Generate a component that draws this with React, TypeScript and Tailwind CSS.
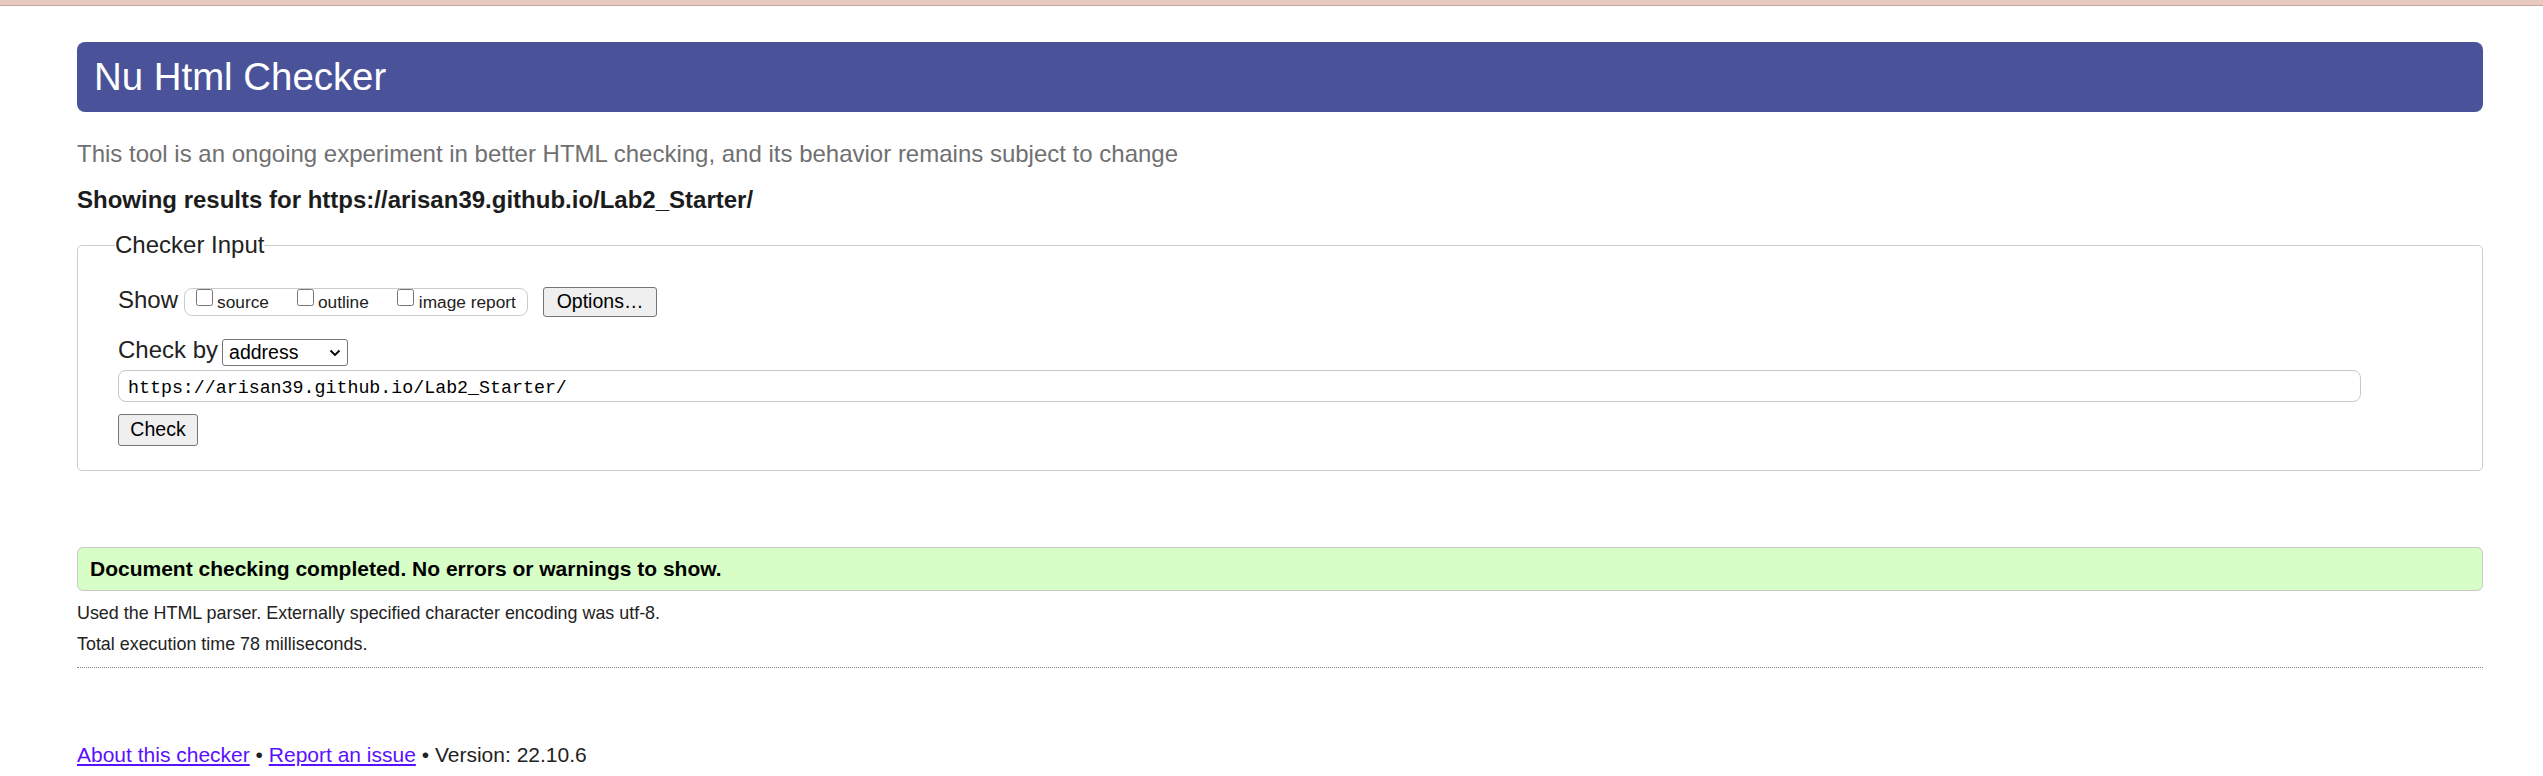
import React from "react";

function Chevron() {
  return (
    <svg width="12" height="8" viewBox="0 0 12 8" className="block">
      <path d="M1.5 1.5 L6 6 L10.5 1.5" fill="none" stroke="#000" strokeWidth="1.8" />
    </svg>
  );
}

export default function App() {
  return (
    <div className="min-h-screen bg-white text-[#222] font-['Liberation_Sans',Arial,sans-serif]">
      <div className="h-[6px] bg-[#e8c8bf] border-b border-[#c4a69e]" />
      <div className="ml-[77px] mr-[60px]">
        <header className="mt-[36px] h-[70px] rounded-[8px] bg-[#4a539a] flex items-center pl-[17px]">
          <h1 className="text-[38.4px] leading-none text-white font-normal">Nu Html Checker</h1>
        </header>
        <p className="mt-[28px] text-[24px] leading-[28px] text-[#707070]">
          This tool is an ongoing experiment in better HTML checking, and its behavior remains subject to change
        </p>
        <p className="mt-[18px] text-[24px] leading-[28px] font-bold text-[#1c1c1c]">
          Showing results for https://arisan39.github.io/Lab2_Starter/
        </p>
        <fieldset className="mt-[18px] border border-[#cccccc] rounded-[5px] pl-[40px] pb-[24px]">
          <legend className="ml-[-3px] text-[24px] leading-[26px] text-[#222]">Checker Input</legend>
          <div className="mt-[29px] flex items-start h-[30px]">
            <span className="mt-[-1px] text-[24px] leading-[28px]">Show</span>
            <div className="ml-[6px] mt-[1px] h-[28px] w-[344px] border border-[#cccccc] rounded-[8px] flex items-start pl-[11px]">
              <input type="checkbox" className="m-0 w-[17px] h-[17px]" />
              <span className="ml-[4px] mt-[3px] text-[17.3px] leading-[20px]">source</span>
              <input type="checkbox" className="ml-[28px] m-0 w-[17px] h-[17px]" />
              <span className="ml-[4px] mt-[3px] text-[17.3px] leading-[20px]">outline</span>
              <input type="checkbox" className="ml-[28px] m-0 w-[17px] h-[17px]" />
              <span className="ml-[5px] mt-[3px] text-[17.3px] leading-[20px]">image report</span>
            </div>
            <button className="ml-[15px] h-[30px] w-[114px] bg-[#efefef] border border-[#767676] rounded-[3px] text-[19.5px] leading-none text-black">
              Options…
            </button>
          </div>
          <div className="mt-[19px] flex items-start">
            <span className="text-[24px] leading-[28px]">Check by</span>
            <div className="ml-[4px] mt-[3px] h-[27px] w-[126px] border border-[#767676] rounded-[3px] flex items-center justify-between pl-[6px] pr-[6px]">
              <span className="text-[19.5px] leading-none text-black">address</span>
              <Chevron />
            </div>
          </div>
          <div className="mt-[4px] h-[32px] w-[2243px] border border-[#c8c8c8] rounded-[8px] flex items-center pl-[9px] pt-[4px] font-['Liberation_Mono','DejaVu_Sans_Mono',monospace] text-[18.3px] leading-none text-black">
            https://arisan39.github.io/Lab2_Starter/
          </div>
          <button className="mt-[12px] block h-[32px] w-[80px] bg-[#efefef] border border-[#767676] rounded-[3px] text-[19.5px] leading-none text-black">
            Check
          </button>
        </fieldset>
        <div className="mt-[76px] h-[44px] bg-[#d7fec6] border border-[#c8c8c8] rounded-[6px] flex items-center pl-[12px]">
          <span className="text-[21px] font-bold text-black">Document checking completed. No errors or warnings to show.</span>
        </div>
        <div className="mt-[7px] text-[17.9px] leading-[31px] text-[#222]">
          <p>Used the HTML parser. Externally specified character encoding was utf-8.</p>
          <p>Total execution time 78 milliseconds.</p>
        </div>
        <hr className="mt-[7px] border-0 border-t border-dotted border-[#888888]" />
        <p className="mt-[73px] text-[21px] leading-[28px] text-[#222]">
          <a href="#" className="text-[#5a10ff] underline">About this checker</a>
          {" • "}
          <a href="#" className="text-[#5a10ff] underline">Report an issue</a>
          {" • Version: 22.10.6"}
        </p>
      </div>
    </div>
  );
}
